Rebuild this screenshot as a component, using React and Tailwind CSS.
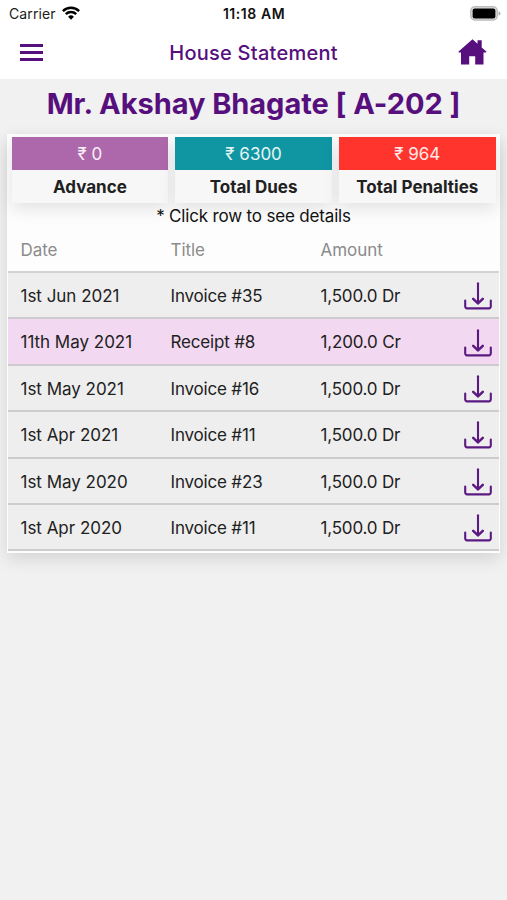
const SUMMARY = [
  { label: 'Advance', value: '0', cls: 'bg-[#ad68ab]' },
  { label: 'Total Dues', value: '6300', cls: 'bg-[#1095a2]' },
  { label: 'Total Penalties', value: '964', cls: 'bg-[#ff352d]' },
];

const ROWS = [
  { date: '1st Jun 2021', title: 'Invoice #35', amount: '1,500.0 Dr' },
  { date: '11th May 2021', title: 'Receipt #8', amount: '1,200.0 Cr', credit: true },
  { date: '1st May 2021', title: 'Invoice #16', amount: '1,500.0 Dr' },
  { date: '1st Apr 2021', title: 'Invoice #11', amount: '1,500.0 Dr' },
  { date: '1st May 2020', title: 'Invoice #23', amount: '1,500.0 Dr' },
  { date: '1st Apr 2020', title: 'Invoice #11', amount: '1,500.0 Dr' },
];

function WifiIcon() {
  return (
    <svg className="w-[18px] h-[14px] ml-[6px] mb-[2px]" viewBox="0 0 18 14" fill="none" stroke="#000" strokeWidth="2.5">
      <path d="M0.9 5.1a11.6 11.6 0 0 1 16.2 0" />
      <path d="M3.8 8.2a7.4 7.4 0 0 1 10.4 0" />
      <path d="M9 13.8l-2.9-3a4.1 4.1 0 0 1 5.8 0z" fill="#000" stroke="none" />
    </svg>
  );
}

function BatteryIcon() {
  return (
    <svg className="w-[31px] h-[15px]" viewBox="0 0 31 15">
      <rect x="0.8" y="0.8" width="26.4" height="13.2" rx="4" fill="#e2e2e2" stroke="#bdbdbd" strokeWidth="1.5" />
      <rect x="2.6" y="2.4" width="22.8" height="10" rx="2" fill="#000" />
      <path d="M28.6 5.2c1.3.5 1.8 1.3 1.8 2.2s-.5 1.7-1.8 2.2z" fill="#a8a8a8" />
    </svg>
  );
}

function HomeIcon() {
  return (
    <svg className="w-[29px] h-[26px]" viewBox="0 0 29 26" fill="#560f7d">
      <path d="M14.5 0.3L0.3 12.7l.7.8H3V25.5h8.2v-8.3h6v8.3H25.5v-12H27.9l.7-.8-4.9-4.3V1.2H19.5v3.5z" />
    </svg>
  );
}

function DownloadIcon() {
  return (
    <svg className="w-[28px] h-[28px]" viewBox="0 0 28 28" fill="none" stroke="#5b1a82" strokeWidth="2.1" strokeLinecap="round" strokeLinejoin="round">
      <path d="M14 1.3v20" />
      <path d="M9.2 16.8l4.8 4.6 4.8-4.6" strokeWidth="2.5" />
      <path d="M1.2 18.6v6a1.8 1.8 0 0 0 1.8 1.8h22a1.8 1.8 0 0 0 1.8-1.8v-6" />
    </svg>
  );
}

export default function App() {
  return (
    <div className="w-full h-screen overflow-hidden bg-[#f1f1f1] font-['Inter',sans-serif] text-[#212121]">
      {/* Status bar + nav */}
      <header className="h-[79px] bg-white">
        <div className="h-[27px] grid grid-cols-3 items-center pl-[8px] pr-[7px]">
          <div className="flex items-center pl-px text-[14px] tracking-[0.1px]">
            Carrier
            <WifiIcon />
          </div>
          <span className="text-center text-[14px] font-semibold tracking-[0.55px] text-[#111]">11:18 AM</span>
          <div className="flex justify-end -mr-px">
            <BatteryIcon />
          </div>
        </div>
        <div className="h-[50px] flex items-center justify-between pl-5 pr-[20px]">
          <div className="w-[29px] flex flex-col gap-[4px]">
            <span className="w-[23px] h-[3px] bg-[#560f7d]" />
            <span className="w-[23px] h-[3px] bg-[#560f7d]" />
            <span className="w-[23px] h-[3px] bg-[#560f7d]" />
          </div>
          <h1 className="pt-[1px] text-[20px] font-medium tracking-[0.25px] text-[#560f7d]">House Statement</h1>
          <HomeIcon />
        </div>
      </header>

      <h2 className="h-[55px] pb-[5px] flex items-center justify-center text-[29px] font-bold tracking-[-0.05px] text-[#560f7d] whitespace-nowrap">
        Mr. Akshay Bhagate [ A-202 ]
      </h2>

      {/* Statement card */}
      <section className="mx-[7px] h-[419px] px-[1px] bg-[#fdfdfd] shadow-[0_6px_16px_rgba(0,0,0,0.12)]">
        <div className="flex gap-[7px] pl-[3.6px] pr-[3.4px] pt-[3px]">
          {SUMMARY.map((s) => (
            <div key={s.label} className="flex-1 bg-[#f7f7f7] text-center shadow-[0_6px_16px_rgba(0,0,0,0.11)]">
              <p className={`h-[33px] pt-[1px] leading-[33px] text-[17px] text-white/90 ${s.cls}`}>₹ {s.value}</p>
              <p className="h-[33px] pt-[1px] leading-[33px] text-[17px] font-bold whitespace-nowrap">{s.label}</p>
            </div>
          ))}
        </div>
        <p className="h-[26px] leading-[26px] text-center text-[17px] tracking-[-0.17px] text-[#111] relative">* Click row to see details</p>

        <div className="h-[44px] pt-[1px] grid grid-cols-[150px_150px_1fr] items-center pl-[12.5px] text-[17px] tracking-[-0.05px] text-[#8b8b8b] border-b-2 border-[#d2d2d2]">
          <span>Date</span>
          <span>Title</span>
          <span>Amount</span>
        </div>
        {ROWS.map((r, i) => (
          <div
            key={i}
            className={`h-[46.4px] pt-[2px] grid grid-cols-[150px_150px_1fr_28px] items-center pl-[12.5px] pr-[7px] text-[17px] tracking-[-0.18px] border-b-2 border-[#cdcbce] ${r.credit ? 'bg-[#f2d8f0]' : 'bg-[#eeeeee]'}`}
          >
            <span className="pt-[1px] tracking-[-0.02px]">{r.date}</span>
            <span className="pt-[1px]">{r.title}</span>
            <span className="pt-[1px]">{r.amount}</span>
            <DownloadIcon />
          </div>
        ))}
      </section>
    </div>
  );
}
